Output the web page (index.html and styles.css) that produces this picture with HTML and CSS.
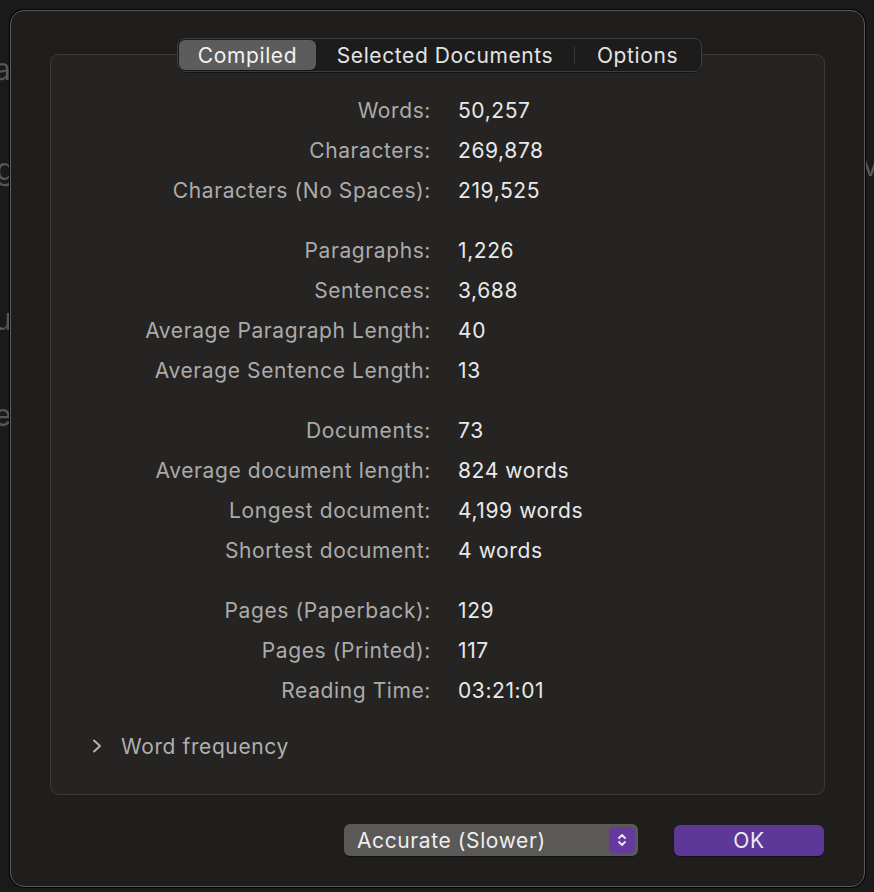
FILE: index.html
```html
<!DOCTYPE html>
<html>
<head>
<meta charset="utf-8">
<link rel="stylesheet" href="styles.css">
</head>
<body>
<div class="backdrop" aria-hidden="true">
  <span class="bg-letter l1">a</span>
  <span class="bg-letter l2">g</span>
  <span class="bg-letter l3">u</span>
  <span class="bg-letter l4">e</span>
  <span class="bg-letter r1">v</span>
</div>
<div class="window">
  <div class="segmented">
    <div class="seg seg-compiled active">Compiled</div>
    <div class="seg seg-selected">Selected Documents</div>
    <div class="seg-sep"></div>
    <div class="seg seg-options">Options</div>
  </div>
  <div class="group-box">
    <div class="stats">
      <div class="stat-group">
        <div class="label">Words:</div><div class="value">50,257</div>
        <div class="label">Characters:</div><div class="value">269,878</div>
        <div class="label">Characters (No Spaces):</div><div class="value">219,525</div>
      </div>
      <div class="stat-group">
        <div class="label">Paragraphs:</div><div class="value">1,226</div>
        <div class="label">Sentences:</div><div class="value">3,688</div>
        <div class="label">Average Paragraph Length:</div><div class="value">40</div>
        <div class="label">Average Sentence Length:</div><div class="value">13</div>
      </div>
      <div class="stat-group">
        <div class="label">Documents:</div><div class="value">73</div>
        <div class="label">Average document length:</div><div class="value">824 words</div>
        <div class="label">Longest document:</div><div class="value">4,199 words</div>
        <div class="label">Shortest document:</div><div class="value">4 words</div>
      </div>
      <div class="stat-group">
        <div class="label">Pages (Paperback):</div><div class="value">129</div>
        <div class="label">Pages (Printed):</div><div class="value">117</div>
        <div class="label">Reading Time:</div><div class="value">03:21:01</div>
      </div>
    </div>
    <div class="disclosure">
      <svg class="chevron" width="12" height="14" viewBox="0 0 12 14"><polyline points="3,1.5 9,7 3,12.5" fill="none" stroke="#b4b3b2" stroke-width="2" stroke-linecap="round" stroke-linejoin="round"/></svg>
      <span class="disclosure-label">Word frequency</span>
    </div>
  </div>
  <div class="footer">
    <div class="popup">
      <span class="popup-text">Accurate (Slower)</span>
      <span class="stepper">
        <svg width="12" height="16" viewBox="0 0 12 16"><polyline points="3,6 6,3 9,6" fill="none" stroke="#f0eaf8" stroke-width="1.8" stroke-linecap="round" stroke-linejoin="round"/><polyline points="3,10 6,13 9,10" fill="none" stroke="#f0eaf8" stroke-width="1.8" stroke-linecap="round" stroke-linejoin="round"/></svg>
      </span>
    </div>
    <div class="ok-button">OK</div>
  </div>
</div>
</body>
</html>
```

FILE: styles.css
```css
* { box-sizing: border-box; }

html, body {
  margin: 0;
  padding: 0;
  background: #1a1a1a;
  width: 874px;
  height: 892px;
  overflow: hidden;
  font-family: Inter, "Noto Sans", "Liberation Sans", sans-serif;
}

body {
  padding: 10px 9px 0 10px;
  position: relative;
  font-size: 21px;
  letter-spacing: 0.6px;
}

.backdrop {
  position: absolute;
  inset: 0;
  z-index: 0;
}

.bg-letter {
  position: absolute;
  font-size: 30px;
  color: #565656;
  filter: blur(0.6px);
  line-height: 1;
}
.l1 { left: -6px; top: 54px; }
.l2 { left: -4px; top: 154px; }
.l3 { left: -6px; top: 304px; }
.l4 { left: -6px; top: 400px; }
.r1 { left: 862px; top: 150px; }

.window {
  position: relative;
  z-index: 1;
  width: 855px;
  height: 877px;
  background: #1f1e1d;
  border: 1px solid #5a5a5a;
  border-radius: 14px;
  box-shadow: 0 0 0 1px #050505;
  padding: 27px 0 0 39px;
  display: flex;
  flex-direction: column;
}

.segmented {
  position: relative;
  z-index: 2;
  align-self: flex-start;
  margin-left: 127px;
  width: 525px;
  height: 34px;
  background: #1d1c1c;
  border: 1px solid #3d3d3d;
  border-radius: 8px;
  display: flex;
  align-items: center;
  padding: 0 1px;
  box-shadow: 0 1px 0 rgba(0,0,0,0.4);
}

.seg {
  height: 30px;
  display: flex;
  align-items: center;
  justify-content: center;
  color: #e4e4e4;
}
.seg-compiled { width: 137px; }
.seg-selected { width: 258px; }
.seg-options { flex: 1; }
.seg.active {
  background: #5c5c5c;
  border-radius: 6px;
  color: #f2f2f2;
  box-shadow: 0 1px 1px rgba(0,0,0,0.35);
}
.seg-sep {
  width: 1px;
  height: 18px;
  background: #353535;
}

.group-box {
  margin-top: -18px;
  width: 775px;
  height: 741px;
  background: #252423;
  border: 1px solid #3b3a39;
  border-radius: 9px;
  padding-top: 35px;
  display: flex;
  flex-direction: column;
}

.stats {
  display: flex;
  flex-direction: column;
  gap: 20px;
}

.stat-group {
  display: grid;
  grid-template-columns: 380px 1fr;
  column-gap: 27px;
  grid-auto-rows: 40px;
  align-items: center;
}

.label {
  text-align: right;
  color: #acabaa;
}
.value {
  color: #e9e9e9;
}

.disclosure {
  margin-top: 24px;
  height: 24px;
  display: flex;
  align-items: center;
  padding-left: 40px;
  color: #b0afae;
}
.chevron { margin-right: 18px; }

.footer {
  margin-top: 29px;
  display: flex;
  align-items: center;
  padding-left: 294px;
  gap: 36px;
}

.popup {
  width: 294px;
  height: 32px;
  background: #5a5958;
  border-radius: 6px;
  display: flex;
  align-items: center;
  justify-content: space-between;
  padding: 0 3px 0 13px;
  box-shadow: 0 1px 1px rgba(0,0,0,0.4);
}
.popup-text {
  color: #eeeeee;
}
.stepper {
  width: 26px;
  height: 26px;
  border-radius: 5px;
  background: #66399f;
  display: flex;
  align-items: center;
  justify-content: center;
}

.ok-button {
  width: 150px;
  height: 31px;
  background: #5d3896;
  border-radius: 6px;
  display: flex;
  align-items: center;
  justify-content: center;
  color: #eeeaf3;
  box-shadow: 0 1px 1px rgba(0,0,0,0.4);
}
```
